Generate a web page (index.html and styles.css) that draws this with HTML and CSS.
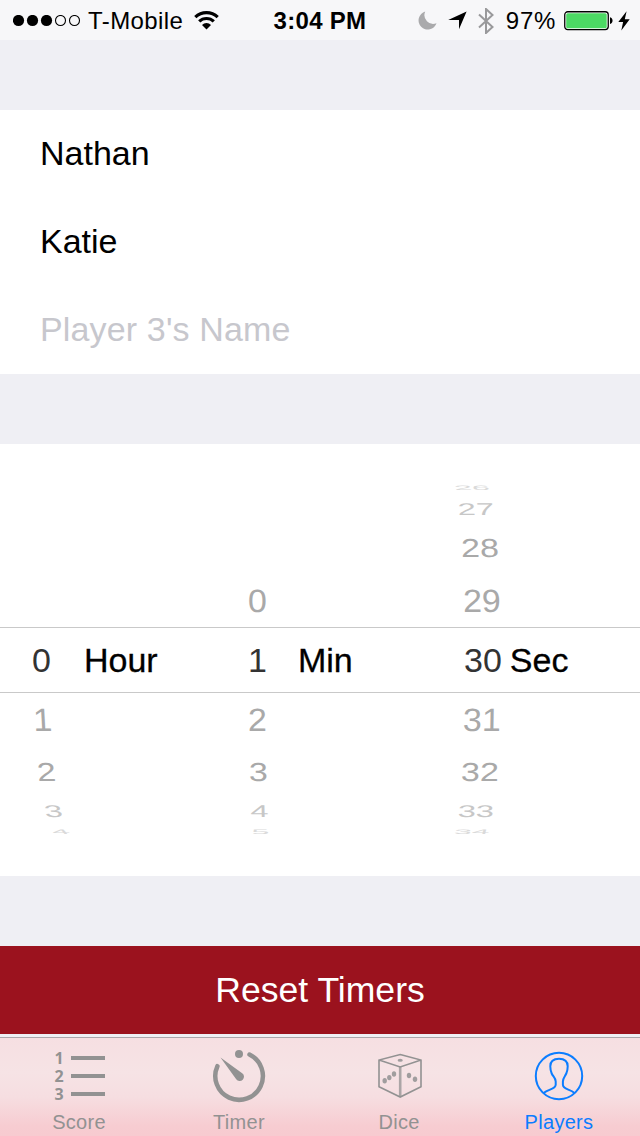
FILE: index.html
```html
<!DOCTYPE html>
<html lang="en">
<head>
<meta charset="utf-8">
<title>Players</title>
<link rel="stylesheet" href="styles.css">
</head>
<body>
<div class="screen">
  <header class="status">
    <div class="status-left">
      <svg class="signal" width="68" height="12" viewBox="0 0 68 12">
        <circle cx="5.5" cy="5.500" r="5.6"/><circle cx="19.5" cy="5.500" r="5.6"/><circle cx="33.5" cy="5.500" r="5.6"/>
        <circle class="hollow" cx="47.5" cy="5.500" r="5"/><circle class="hollow" cx="61.5" cy="5.500" r="5"/>
      </svg>
      <span class="carrier">T-Mobile</span>
      <svg class="wifi" width="25" height="19" viewBox="0 0 25 19">
        <path class="arc" d="M1.3 6.2a16.2 16.2 0 0 1 22.4 0"/>
        <path class="arc" d="M5.2 10.4a10.6 10.6 0 0 1 14.6 0"/>
        <path d="M12.5 18.4 8 13.9a6.4 6.4 0 0 1 9 0z"/>
      </svg>
    </div>
    <div class="clock">3:04 PM</div>
    <div class="status-right">
      <svg class="moon" width="19" height="19" viewBox="0 0 19 19"><path d="M7.2.5A9.2 9.2 0 1 0 18.5 12.2 8.8 8.8 0 0 1 7.2.5z"/></svg>
      <svg class="arrow" width="19" height="19" viewBox="0 0 19 19"><path d="M18.6.4 11 18.300V8.900H.2z"/></svg>
      <svg class="bluetooth" width="16" height="26" viewBox="0 0 16 26"><path d="M1 6.5 14.5 19 8 25V1l6.5 6L1 19.5"/></svg>
      <span class="percent">97%</span>
      <svg class="battery" width="50" height="20" viewBox="0 0 50 20">
        <rect class="shell" x=".75" y=".75" width="43.5" height="17.8" rx="3"/>
        <rect class="charge" x="2.2" y="2.2" width="40.500" height="15" rx="1.5"/>
        <path d="M46 6.3c3.4.8 3.4 6 0 6.8z"/>
      </svg>
      <svg class="bolt" width="12" height="20" viewBox="0 0 12 20"><path d="M8.6.2.3 11h4.8L3.3 19.5 11.7 8.3H6.8z"/></svg>
    </div>
  </header>

  <main>
    <section class="names">
      <div class="name">Nathan</div>
      <div class="name">Katie</div>
      <div class="name placeholder">Player 3's Name</div>
    </section>

    <section class="picker">
      <div class="wheel hours">
        <div class="row d4"></div><div class="row d3"></div><div class="row d2"></div><div class="row d1"></div>
        <div class="row now"><span>0</span><b>Hour</b></div>
        <div class="row d1"><span>1</span></div>
        <div class="row d2"><span>2</span></div>
        <div class="row d3"><span>3</span></div>
        <div class="row d4"><span>4</span></div>
      </div>
      <div class="wheel minutes">
        <div class="row d4"></div><div class="row d3"></div><div class="row d2"></div>
        <div class="row d1"><span>0</span></div>
        <div class="row now"><span>1</span><b>Min</b></div>
        <div class="row d1"><span>2</span></div>
        <div class="row d2"><span>3</span></div>
        <div class="row d3"><span>4</span></div>
        <div class="row d4"><span>5</span></div>
      </div>
      <div class="wheel seconds">
        <div class="row d4 up"><span>26</span></div>
        <div class="row d3 up"><span>27</span></div>
        <div class="row d2 up"><span>28</span></div>
        <div class="row d1 up"><span>29</span></div>
        <div class="row now"><span>30</span><b>Sec</b></div>
        <div class="row d1"><span>31</span></div>
        <div class="row d2"><span>32</span></div>
        <div class="row d3"><span>33</span></div>
        <div class="row d4"><span>34</span></div>
      </div>
    </section>

    <div class="reset">Reset Timers</div>
  </main>

  <nav class="tabs">
    <div class="tab">
      <svg class="icon" width="56" height="56" viewBox="0 0 56 56">
        <g class="list-lines"><path d="M20 10h34M20 28h34M20 46h34"/></g>
        <g class="list-digits"><text x="3.500" y="15.500">1</text><text x="3.500" y="33.500">2</text><text x="3.500" y="51.500">3</text></g>
      </svg>
      <span>Score</span>
    </div>
    <div class="tab">
      <svg class="icon" width="56" height="56" viewBox="0 0 56 56">
        <path class="dial" d="M38.500 6.600A23.800 23.800 0 1 1 6.400 18.200"/>
        <circle cx="28" cy="6" r="4"/>
        <path d="M9.5 9.5 31.2 25.2a4.3 4.3 0 1 1-6 6z"/>
      </svg>
      <span>Timer</span>
    </div>
    <div class="tab">
      <svg class="icon" width="56" height="56" viewBox="0 0 56 56">
        <path class="edges" d="M29.200 6.500 50 12v26.700L29.200 49 8 38.700V12zM8 12l21.200 6.900L50 12"/>
        <path class="spine" d="M29.200 19v30"/>
        <g class="pips"><ellipse cx="29.2" cy="12.2" rx="2.6" ry="1.5"/><ellipse cx="13.7" cy="32.7" rx="2.2" ry="2.700"/><ellipse cx="18.3" cy="29.6" rx="2.2" ry="2.700"/><ellipse cx="23" cy="26" rx="2.2" ry="2.700"/><ellipse cx="38" cy="27.5" rx="2.2" ry="2.700"/><ellipse cx="44" cy="31.3" rx="2.2" ry="2.700"/></g>
      </svg>
      <span>Dice</span>
    </div>
    <div class="tab active">
      <svg class="icon" width="56" height="56" viewBox="0 0 56 56">
        <circle class="ring" cx="28" cy="28" r="23.2"/>
        <path class="person" d="M12.500 45C17.500 41 24.700 41.300 24.700 36.800V33.500C24.700 30 22 28.500 20.700 25.500C19.600 23 19.300 20.500 19.300 18.200C19.300 13 22.500 10.700 28 10.700S36.700 13 36.700 18.200C36.700 20.500 36.400 23 35.300 25.500C34 28.500 31.900 30 31.900 33.500V36.800C31.900 41.300 38.500 41 43.500 45"/>
      </svg>
      <span>Players</span>
    </div>
  </nav>
</div>
</body>
</html>
```
FILE: styles.css
```css
* { box-sizing: border-box; }
body {
  margin: 0;
  background: #efeff4;
  color: #000;
  font-family: "Liberation Sans", Arial, sans-serif;
}
svg { display: block; flex: none; }
.screen {
  width: 640px;
  height: 1136px;
  display: flex;
  flex-direction: column;
  overflow: hidden;
}

/* status bar */
.status {
  height: 40px;
  display: grid;
  grid-template-columns: 1fr 94px 1fr;
  background: #f7f7f9;
  font-size: 24px;
  line-height: 40px;
  white-space: nowrap;
}
.status-left { display: flex; align-items: center; padding-left: 13px; }
.signal .hollow { fill: none; stroke: #000; stroke-width: 1.1; }
.carrier { margin-left: 7px; letter-spacing: .4px; padding-top: 1px; }
.wifi { margin-left: 11px; }
.wifi .arc { fill: none; stroke: #000; stroke-width: 3.2; }
.clock { font-weight: bold; letter-spacing: .3px; padding-top: 1px; text-align: center; }
.status-right { display: flex; align-items: center; justify-content: flex-end; padding-right: 10px; }
.moon { fill: #aaaaac; margin-right: 11px; }
.arrow { margin-right: 11px; }
.bluetooth { fill: none; stroke: #99999b; stroke-width: 2; margin-right: 12px; }
.percent { letter-spacing: .7px; padding-top: 1px; margin-right: 8px; }
.battery { margin-right: 4px; }
.battery .shell { fill: #fff; stroke: #000; stroke-width: 1.3; }
.battery .charge { fill: #4cd964; }

/* player names */
.names { margin-top: 70px; background: #fff; }
.name { height: 88px; padding-left: 40px; font-size: 34px; line-height: 86px; }
.placeholder { color: #c7c7cd; letter-spacing: .15px; }

/* time picker */
.picker {
  height: 432px;
  margin-top: 70px;
  padding-top: 36px;
  display: grid;
  grid-template-columns: 214px 214px 212px;
  background: #fff;
  font-size: 34px;
  line-height: 40px;
}
.hours { --inset: 32px; --label: 33px; --s1: 1px; --s2: 5px; --s3: 12px; --s4: 19px; --k: -1; }
.minutes { --inset: 34px; --label: 31px; --s1: 0px; --s2: 1px; --s3: 2px; --s4: 3px; --k: -.1; }
.seconds { --inset: 36px; --label: 8px; --s1: -1px; --s2: -3px; --s3: -7px; --s4: -11px; --k: .3; }
.row { display: flex; align-items: center; padding-left: var(--inset); color: #a9a9a9; }
.row span { display: block; }
.now { height: 66px; border: solid #c9c9c9; border-width: 1px 0; color: #333; }
.now b { margin-left: var(--label); color: #000; font-weight: normal; -webkit-text-stroke: .3px #000; }
.d1 { height: 53px; }
.d2 { height: 52px; }
.d3 { height: 26px; color: #c7c7c7; }
.d4 { height: 16px; color: #dadada; }
.d1 span { transform: translateX(var(--s1)) scaleY(.95) skewX(calc(var(--k) * -3deg)); }
.d2 span { transform: translateX(var(--s2)) scaleY(.77) skewX(calc(var(--k) * -4deg)); }
.d3 span { transform: translateX(var(--s3)) scale(.96, .5) skewX(calc(var(--k) * -6deg)); }
.d4 span { transform: translateX(var(--s4)) scale(.94, .19) skewX(calc(var(--k) * -10deg)); }
.row.up { --k: -.3; }

.reset {
  height: 88px;
  margin-top: 70px;
  background: #9b121e;
  color: #fff;
  font-size: 35.6px;
  line-height: 88px;
  text-align: center;
}

/* tab bar */
.tabs {
  height: 99px;
  margin-top: 3px;
  padding-right: 2px;
  display: grid;
  grid-template-columns: repeat(4, 160px);
  border-top: 1px solid #aaa5aa;
  background: linear-gradient(#f6dfe2 0, #f6e3e5 35%, #f6dee1 60%, #f7ccd1 90%, #f7cbd0 100%);
}
.tab {
  display: flex;
  flex-direction: column;
  align-items: center;
  padding: 10px 2px 0 0;
  color: #929292;
  font-size: 20px;
  line-height: 24px;
  letter-spacing: .3px;
}
.tab span { margin-top: 6px; }
.active { color: #0b7dff; }
.icon { fill: currentColor; }
.list-lines { stroke: currentColor; stroke-width: 4; }
.list-digits { font: bold 16px "Open Sans", sans-serif; letter-spacing: 0; }
.dial { fill: none; stroke: currentColor; stroke-width: 4.5; stroke-linecap: round; }
.edges { fill: none; stroke: currentColor; stroke-width: 1.6; }
.spine { stroke: currentColor; stroke-width: 2.6; opacity: .75; }
.pips { opacity: .85; }
.ring, .person { fill: none; stroke: currentColor; stroke-width: 2; }
```
